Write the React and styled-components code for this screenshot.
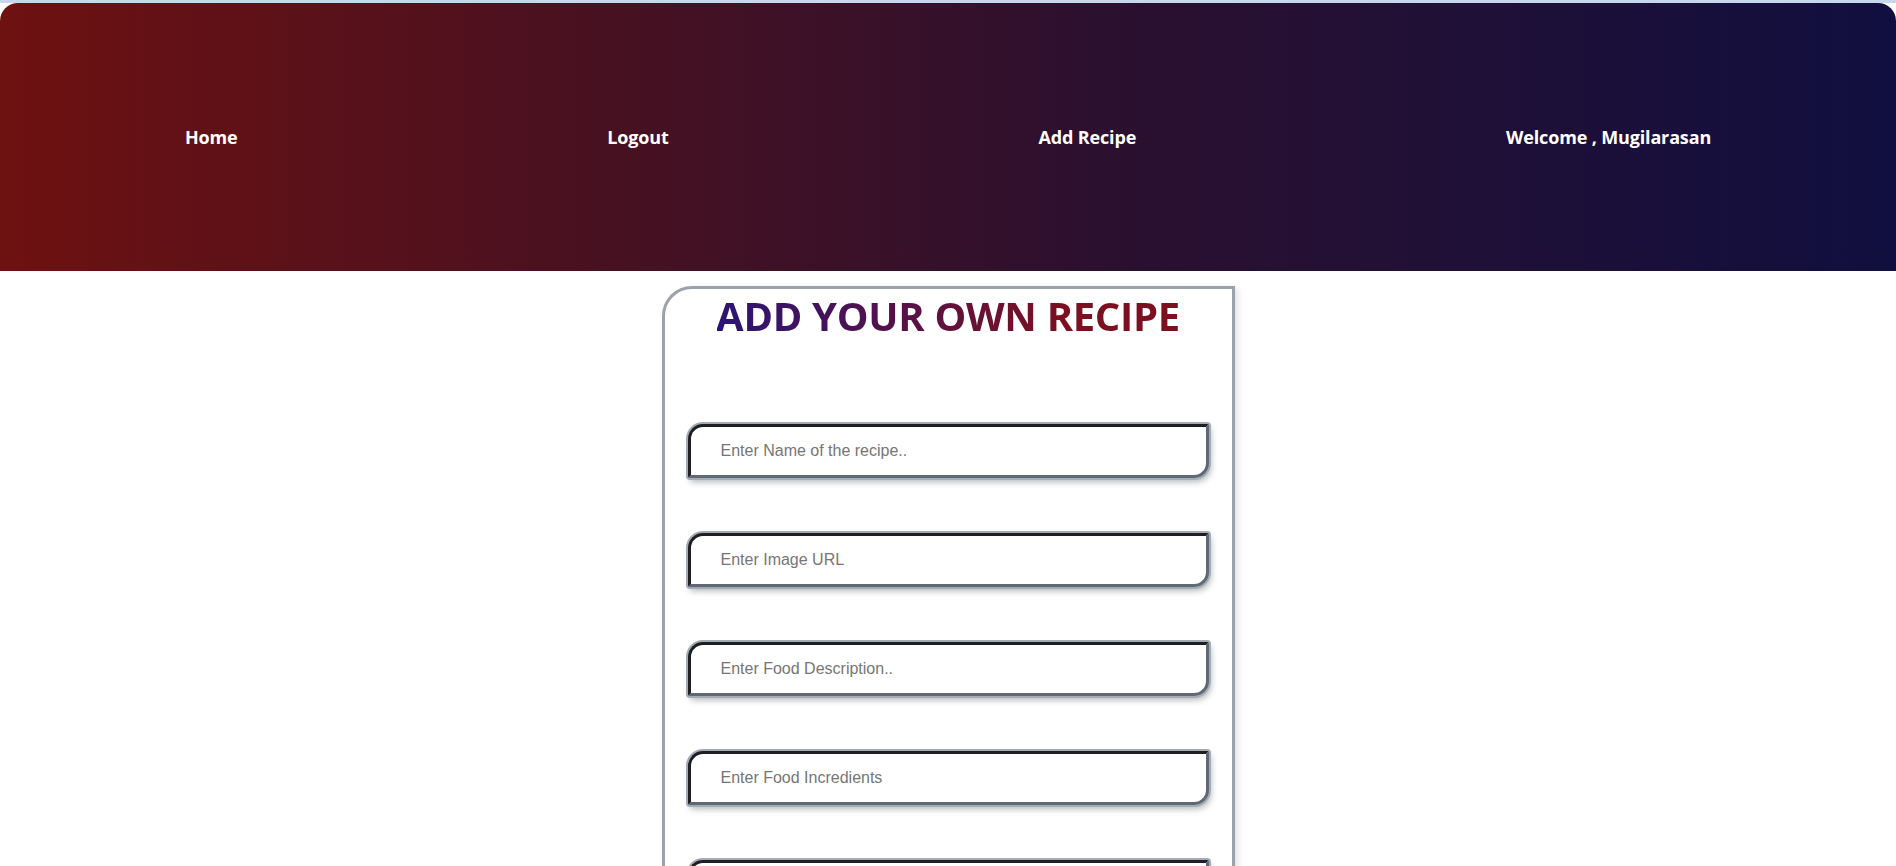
import React from 'react'
import styled, { createGlobalStyle } from 'styled-components'

const GlobalStyle = createGlobalStyle`
    html, body {
        margin: 0;
        padding: 0;
        background: #ffffff;
        overflow: hidden;
    }
    body {
        border-top: 3px solid #c8d8ec;
        font-family: "Open Sans", "Noto Sans", sans-serif;
    }
`

const fields = [
    "Enter Name of the recipe..",
    "Enter Image URL",
    "Enter Food Description..",
    "Enter Food Incredients",
    "Enter Cooking Time..",
    "Enter Category..",
]

function App() {
    return (
        <>
            <GlobalStyle />
            <Navbar>
                <NavItem href="#">Home</NavItem>
                <NavItem href="#">Logout</NavItem>
                <NavItem href="#">Add Recipe</NavItem>
                <NavItem as="span">Welcome , Mugilarasan</NavItem>
            </Navbar>
            <FormCard>
                <Title>ADD YOUR OWN RECIPE</Title>
                <FieldList>
                    {fields.map((f) => (
                        <Field key={f} type="text" placeholder={f} />
                    ))}
                    <SubmitBtn>Add Recipe</SubmitBtn>
                </FieldList>
            </FormCard>
        </>
    )
}

const Navbar = styled.nav`
    height: 268px;
    display: flex;
    justify-content: space-around;
    align-items: center;
    border-radius: 18px 18px 0 0;
    background: linear-gradient(to right, #6e1111, #4a1120 30%, #2a1030 60%, #110f3f);
`

const NavItem = styled.a`
    color: #ffffff;
    font-family: "Open Sans", sans-serif;
    font-weight: 700;
    font-size: 18px;
    text-decoration: none;
    letter-spacing: -0.15px;
`

const FormCard = styled.div`
    width: 567px;
    margin: 15px auto 0;
    border: 3px solid #9aa2ab;
    border-radius: 30px 0 0 0;
    box-shadow: 3px 2px 6px rgba(0, 0, 0, 0.12);
    padding-top: 3px;
    height: 900px;
`

const Title = styled.h1`
    margin: 0;
    text-align: center;
    font-family: "Open Sans", sans-serif;
    font-weight: 700;
    font-size: 40px;
    line-height: 48px;
    letter-spacing: -0.3px;
    background: linear-gradient(to right, #2c1474, #7c1020 75%);
    background-size: 462px 100%;
    background-position: center;
    background-repeat: no-repeat;
    -webkit-background-clip: text;
    background-clip: text;
    color: transparent;
`

const FieldList = styled.div`
    display: flex;
    flex-direction: column;
    align-items: center;
    gap: 55px;
    padding-top: 84px;
`

const Field = styled.input`
    box-sizing: border-box;
    width: 521px;
    height: 54px;
    padding: 0 0 0 30px;
    border-style: solid;
    border-width: 3px;
    border-color: #1e1f22 #5f6873 #5f6873 #1e1f22;
    border-radius: 15px 2px 15px 2px;
    box-shadow: 0 0 0 2px #a3abb4, 2px 4px 6px rgba(40, 50, 60, 0.35);
    font-family: "Liberation Sans", Arial, sans-serif;
    font-size: 16px;
    outline: none;
    background: #fff;

    &::placeholder {
        color: #767676;
    }
`

const SubmitBtn = styled.button`
    width: 200px;
    height: 48px;
    border: none;
    border-radius: 12px;
    color: #fff;
    font-weight: 700;
    font-size: 18px;
    background: linear-gradient(to right, #2c1474, #7c1020);
`

export default App
